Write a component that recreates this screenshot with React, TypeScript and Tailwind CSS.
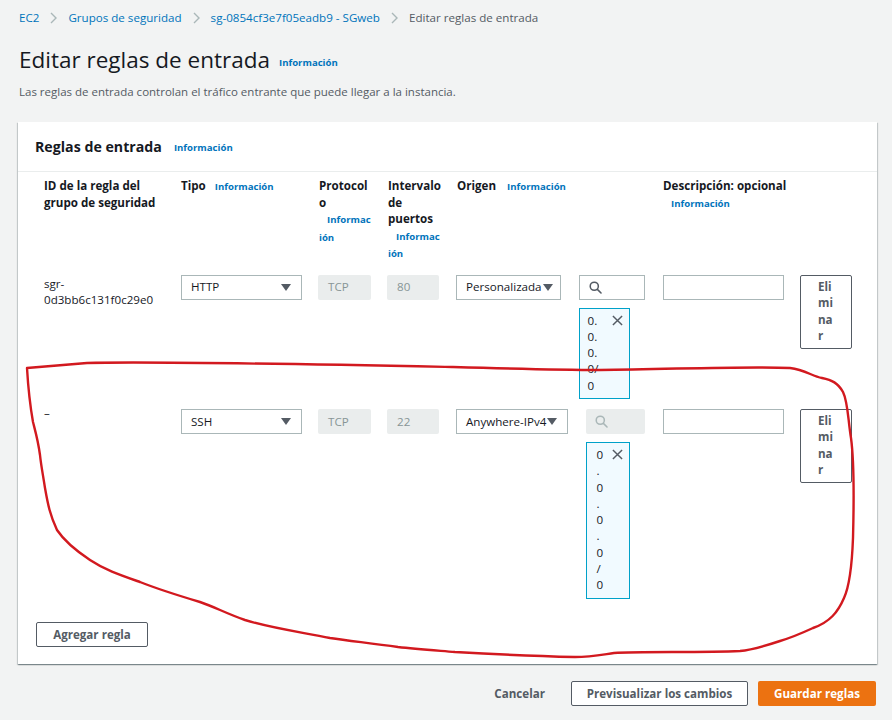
import React from "react";

const Chevron = () => (
  <svg width="7" height="12" viewBox="0 0 7 12" fill="none" stroke="#aab7b8" strokeWidth="1.4" className="mx-[11px] shrink-0">
    <path d="M1 1l5 5-5 5" />
  </svg>
);

const Caret = () => (
  <svg width="10" height="7" viewBox="0 0 10 7" className="shrink-0">
    <path d="M0 0h10L5 7z" fill="#545b64" />
  </svg>
);

const SearchIcon = ({ color }: { color: string }) => (
  <svg width="13" height="13" viewBox="0 0 16 16" fill="none" stroke={color} strokeWidth="1.9">
    <circle cx="6.5" cy="6.5" r="5" />
    <path d="M10.3 10.3L14.8 14.8" strokeLinecap="round" />
  </svg>
);

const XIcon = () => (
  <svg width="11" height="11" viewBox="0 0 12 12" fill="none" stroke="#545b64" strokeWidth="1.6" className="mt-[2px] shrink-0">
    <path d="M1 1l10 10M11 1L1 11" />
  </svg>
);

const Info = ({ children, className = "" }: { children: React.ReactNode; className?: string }) => (
  <span className={`text-[9.6px] font-bold text-[#0073bb] ${className}`}>{children}</span>
);

const cols = "grid grid-cols-[137px_137px_69px_69px_207px_137px_52px]";

function Row({
  id,
  tipo,
  port,
  origen,
  disabledSearch,
  tokenW,
  textW,
  tokenPl,
  selectPr,
}: {
  id: React.ReactNode;
  tipo: string;
  port: string;
  origen: string;
  disabledSearch: boolean;
  tokenW: string;
  textW: string;
  tokenPl: string;
  selectPr: string;
}) {
  return (
    <div className={`${cols} text-[11.6px] text-[#16191f]`}>
      <div className="pr-[17px] pt-[1px] leading-[16px]">{id}</div>
      <div>
        <div className="flex h-[25px] w-[121px] items-center justify-between border border-[#aab7b8] pl-[9px] pr-[10px]">
          <span>{tipo}</span>
          <Caret />
        </div>
      </div>
      <div>
        <div className="flex h-[25px] w-[53px] items-center rounded-[2px] bg-[#eaeded] pl-[10px] text-[#879596]">TCP</div>
      </div>
      <div>
        <div className="flex h-[25px] w-[52px] items-center rounded-[2px] bg-[#eaeded] pl-[10px] text-[#879596]">{port}</div>
      </div>
      <div className="flex items-start gap-[18px] pr-[18px]">
        <div className={`flex h-[25px] shrink-0 items-center gap-[1px] border border-[#aab7b8] pl-[9px] ${selectPr}`}>
          <span>{origen}</span>
          <Caret />
        </div>
        <div className="flex min-w-0 flex-1 flex-col">
          {disabledSearch ? (
            <div className="flex h-[25px] items-center rounded-[2px] bg-[#eaeded] pl-[9px]">
              <SearchIcon color="#aab7b8" />
            </div>
          ) : (
            <div className="flex h-[25px] items-center border border-[#aab7b8] pl-[9px]">
              <SearchIcon color="#545b64" />
            </div>
          )}
          <div className={`mt-[8px] flex items-start justify-between border border-[#00a1c9] bg-[#f1faff] pb-[4px] pr-[6px] pt-[4px] ${tokenW} ${tokenPl}`}>
            <span className={`[overflow-wrap:anywhere] leading-[16.3px] ${textW}`}>0.0.0.0/0</span>
            <XIcon />
          </div>
        </div>
      </div>
      <div>
        <div className="h-[25px] w-[121px] border border-[#aab7b8]" />
      </div>
      <div>
        <button className="w-[52px] break-all rounded-[2px] border border-[#545b64] pb-[3px] pl-[17px] pr-[15px] pt-[3px] text-left text-[11.6px] font-bold leading-[16.5px] text-[#545b64]">
          Eliminar
        </button>
      </div>
    </div>
  );
}

export default function App() {
  return (
    <div className="relative min-h-[720px] bg-[#f2f3f3] font-['Open_Sans',sans-serif] text-[#16191f]">
      <nav className="flex h-[36px] items-center px-[19px] text-[11.6px]">
        <span className="text-[#0073bb]">EC2</span>
        <Chevron />
        <span className="text-[#0073bb]">Grupos de seguridad</span>
        <Chevron />
        <span className="text-[#0073bb]">sg-0854cf3e7f05eadb9 - SGweb</span>
        <Chevron />
        <span className="text-[#545b64]">Editar reglas de entrada</span>
      </nav>

      <div className="px-[19px]">
        <div className="flex h-[48px] items-center">
          <h1 className="text-[22.5px] font-normal leading-[28px] text-[#16191f]">Editar reglas de entrada</h1>
          <Info className="ml-[9px] mt-[6px]">Información</Info>
        </div>
        <p className="flex h-[16px] items-center text-[11.5px] text-[#545b64]">
          Las reglas de entrada controlan el tráfico entrante que puede llegar a la instancia.
        </p>
      </div>

      <section className="ml-[18px] mr-[15px] mt-[22px] bg-white shadow-[0_1px_1px_0_rgba(0,28,36,0.3),1px_1px_1px_0_rgba(0,28,36,0.15),-1px_1px_1px_0_rgba(0,28,36,0.15)]">
        <div className="flex h-[50px] items-center border-b border-[#eaeded] px-[17px]">
          <h2 className="text-[14.2px] font-bold text-[#16191f]">Reglas de entrada</h2>
          <Info className="ml-[12px] mt-[3px]">Información</Info>
        </div>

        <div className="pl-[26px]">
          <div className={`${cols} pt-[6px] text-[11.6px] font-bold leading-[16.5px] text-[#16191f]`}>
            <div className="pr-[17px]">ID de la regla del grupo de seguridad</div>
            <div>
              Tipo <Info className="ml-[6px]">Información</Info>
            </div>
            <div className="pl-[1px]">
              Protocol
              <br />o
              <br />
              <Info className="ml-[8px]">Informac</Info>
              <br />
              <Info>ión</Info>
            </div>
            <div className="pl-[1px]">
              Intervalo
              <br />
              de
              <br />
              puertos
              <br />
              <Info className="ml-[8px]">Informac</Info>
              <br />
              <Info>ión</Info>
            </div>
            <div className="pl-[1px]">
              Origen <Info className="ml-[8px]">Información</Info>
            </div>
            <div>
              Descripción: opcional
              <br />
              <Info className="ml-[8px]">Información</Info>
            </div>
            <div />
          </div>

          <div className="flex flex-col gap-[10px] pt-[12px]">
            <Row
              id="sgr-0d3bb6c131f0c29e0"
              tipo="HTTP"
              port="80"
              origen="Personalizada"
              disabledSearch={false}
              tokenW="w-[51px]"
              textW="w-[12px]"
              tokenPl="pl-[8px]"
              selectPr="pr-[7px]"
            />
            <Row
              id={<span className="relative top-[-5px]">–</span>}
              tipo="SSH"
              port="22"
              origen="Anywhere-IPv4"
              disabledSearch={true}
              tokenW="w-[44px]"
              textW="w-[8px]"
              tokenPl="pl-[9px]"
              selectPr="pr-[10px]"
            />
          </div>
        </div>

        <div className="px-[18px] pb-[17px] pt-[22px]">
          <button className="h-[25px] w-[112px] rounded-[2px] border border-[#545b64] text-[11.6px] font-bold text-[#545b64]">
            Agregar regla
          </button>
        </div>
      </section>

      <div className="mr-[16px] mt-[17px] flex items-center justify-end text-[11.6px] font-bold">
        <span className="mr-[26px] text-[#545b64]">Cancelar</span>
        <button className="h-[25px] w-[177px] rounded-[2px] border border-[#545b64] bg-white text-[#545b64]">
          Previsualizar los cambios
        </button>
        <button className="ml-[10px] h-[25px] w-[118px] rounded-[2px] bg-[#ec7211] text-white">Guardar reglas</button>
      </div>

      <svg
        className="pointer-events-none absolute left-0 top-0"
        width="892"
        height="720"
        viewBox="0 0 892 720"
        fill="none"
      >
        <path
          d="M27 368 L87 363 C150 361 300 364 453 367 C520 369 560 370 600 370 C680 369 750 366 790 368 C805 370 812 376 822 378 C832 380 838 383 843 392 C848 402 848 420 851 438 C854 460 854 500 853 538 C852 565 850 585 844 598 C838 612 830 622 813 628 C800 634 790 638 780 641 C765 646 752 650 740 651 C700 653 640 651 614 653 C600 655 590 657 575 657 C530 656 490 654 455 652 C430 650 415 649 398 647 C370 643 350 641 330 638 C300 632 270 628 245 620 C225 613 215 607 200 602 C180 596 155 588 140 582 C120 575 105 570 90 560 C75 550 65 542 57 530 C50 515 48 505 45 488 C43 475 41 465 40 455 C38 440 35 430 33 422 C30 405 28 385 27 368 Z"
          stroke="#d2191f"
          strokeWidth="2.4"
          strokeLinejoin="round"
        />
      </svg>
    </div>
  );
}
